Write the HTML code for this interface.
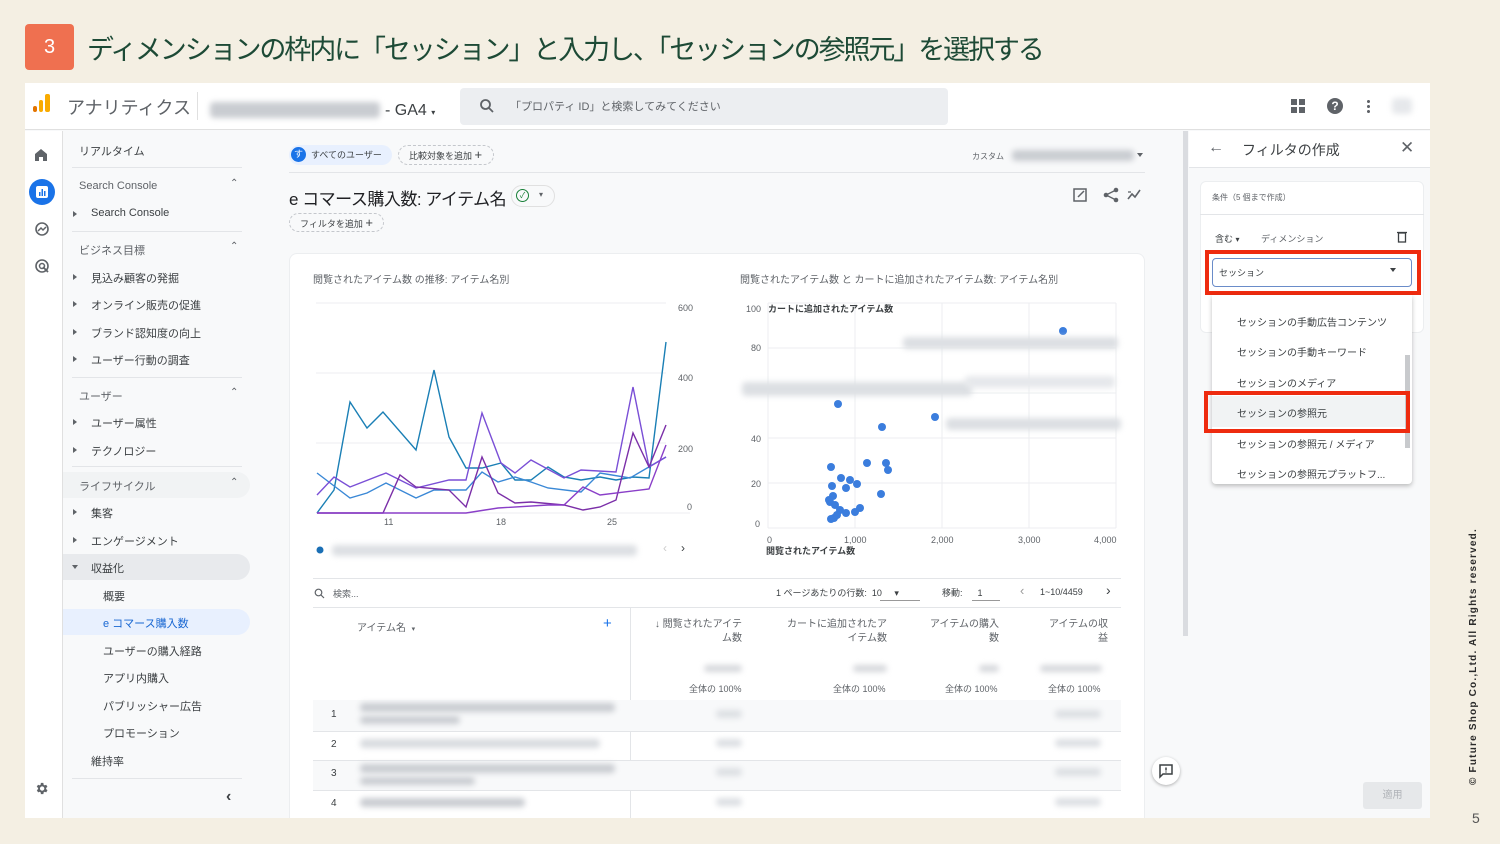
<!DOCTYPE html>
<html><head><meta charset="utf-8"><style>
*{margin:0;padding:0;box-sizing:border-box}
body{width:1500px;height:844px;background:#f4efe3;position:relative;overflow:hidden;font-family:"Liberation Sans","Noto Sans CJK JP",sans-serif;color:#3c4043}
.a{position:absolute;white-space:nowrap}
.s{font-size:11px;color:#3c4043}
.g{color:#5f6368}
.bl{position:absolute;background:#c9ccd1;border-radius:4px;filter:blur(3px)}
.hr{position:absolute;height:1px;background:#e3e5e8}
.tri{position:absolute;width:0;height:0;border-top:3px solid transparent;border-bottom:3px solid transparent;border-left:4px solid #5f6368}
</style></head><body>
<div class="a" style="left:25px;top:24px;width:49px;height:46px;background:#ef7050;border-radius:4px;color:#fff;font-size:20px;text-align:center;line-height:46px">3</div>
<div class="a" style="left:87px;top:28px;font-size:27px;color:#1d4a36;letter-spacing:-2.1px">ディメンションの枠内に「セッション」と入力し、「セッションの参照元」を選択する</div>

<!-- screenshot frame -->
<div class="a" style="left:25px;top:83px;width:1405px;height:735px;background:#f8f9fa"></div>
<!-- top bar -->
<div class="a" style="left:25px;top:83px;width:1405px;height:47px;background:#fff;border-bottom:1px solid #e0e0e0"></div>
<div class="a" style="left:33px;top:106px;width:4px;height:6px;background:#e37400;border-radius:2px"></div>
<div class="a" style="left:39px;top:100px;width:4px;height:12px;background:#f9ab00;border-radius:2px"></div>
<div class="a" style="left:45px;top:94px;width:5px;height:18px;background:#f9ab00;border-radius:2px"></div>
<div class="a" style="left:67px;top:94px;font-size:18px;color:#5f6368">アナリティクス</div>
<div class="a" style="left:197px;top:92px;width:1px;height:28px;background:#e0e0e0"></div>
<div class="bl" style="left:210px;top:102px;width:170px;height:16px"></div>
<div class="a" style="left:385px;top:102px;font-size:16px;color:#3c4043">- GA4 <span style="font-size:8px">▾</span></div>
<div class="a" style="left:460px;top:88px;width:488px;height:37px;background:#eceef1;border-radius:4px"></div>
<svg class="a" style="left:479px;top:98px" width="16" height="16" viewBox="0 0 16 16"><circle cx="6.5" cy="6.5" r="4.5" fill="none" stroke="#5f6368" stroke-width="1.8"/><path d="M10 10l4 4" stroke="#5f6368" stroke-width="1.8"/></svg>
<div class="a g" style="left:510px;top:98px;font-size:11px">「プロパティ ID」と検索してみてください</div>
<svg class="a" style="left:1291px;top:99px" width="14" height="14"><rect x="0" y="0" width="6" height="6" fill="#5f6368"/><rect x="8" y="0" width="6" height="6" fill="#5f6368"/><rect x="0" y="8" width="6" height="6" fill="#5f6368"/><rect x="8" y="8" width="6" height="6" fill="#5f6368"/></svg>
<div class="a" style="left:1327px;top:98px;width:16px;height:16px;border-radius:50%;background:#5f6368;color:#fff;font-size:12px;font-weight:bold;text-align:center;line-height:16px">?</div>
<div class="a" style="left:1367px;top:99px;width:3px;height:14px;background:radial-gradient(circle,#5f6368 1.4px,transparent 1.6px) 0 0/3px 5px"></div>
<div class="bl" style="left:1392px;top:98px;width:20px;height:16px;background:#e6e8eb"></div>

<!-- icon rail -->
<div class="a" style="left:25px;top:131px;width:38px;height:687px;background:#fff;border-right:1px solid #e0e0e0"></div>
<svg class="a" style="left:34px;top:148px" width="14" height="14"><path d="M1 6L7 1l6 5v7H9V9H5v4H1z" fill="#5f6368"/></svg>
<div class="a" style="left:29px;top:179px;width:26px;height:26px;border-radius:50%;background:#1a73e8"></div>
<svg class="a" style="left:36px;top:186px" width="12" height="12"><rect x="0" y="0" width="12" height="12" rx="2" fill="#fff"/><rect x="3" y="6" width="1.5" height="4" fill="#1a73e8"/><rect x="5.5" y="3" width="1.5" height="7" fill="#1a73e8"/><rect x="8" y="5" width="1.5" height="5" fill="#1a73e8"/></svg>
<svg class="a" style="left:34px;top:221px" width="16" height="16"><circle cx="8" cy="8" r="6" fill="none" stroke="#5f6368" stroke-width="1.6"/><path d="M4 10l3-3 2 2 3-3" fill="none" stroke="#5f6368" stroke-width="1.5"/></svg>
<svg class="a" style="left:34px;top:258px" width="16" height="16"><circle cx="8" cy="8" r="6" fill="none" stroke="#5f6368" stroke-width="1.6"/><circle cx="8" cy="8" r="2.5" fill="none" stroke="#5f6368" stroke-width="1.5"/><path d="M9 9l5 5" stroke="#5f6368" stroke-width="1.8"/></svg>
<svg class="a" style="left:34px;top:781px" width="15" height="15" viewBox="0 0 24 24"><path fill="#5f6368" d="M19.4 13a7.5 7.5 0 000-2l2.1-1.6-2-3.5-2.5 1a7 7 0 00-1.7-1L15 3h-4l-.4 2.9a7 7 0 00-1.7 1l-2.5-1-2 3.5L6.6 11a7.5 7.5 0 000 2l-2.1 1.6 2 3.5 2.5-1a7 7 0 001.7 1L11 21h4l.4-2.9a7 7 0 001.7-1l2.5 1 2-3.5zM13 15.5a3.5 3.5 0 110-7 3.5 3.5 0 010 7z"/></svg>

<!-- nav -->
<div class="a s" style="left:79px;top:143px">リアルタイム</div>
<div class="hr" style="left:72px;top:167px;width:170px"></div>
<div class="a s g" style="left:79px;top:180px">Search Console</div><div class="a g" style="left:230px;top:178px;font-size:10px">⌃</div>
<div class="tri" style="left:73px;top:211px"></div><div class="a s" style="left:91px;top:207px">Search Console</div>
<div class="hr" style="left:72px;top:231px;width:170px"></div>
<div class="a s g" style="left:79px;top:242px">ビジネス目標</div><div class="a g" style="left:230px;top:241px;font-size:10px">⌃</div>
<div class="tri" style="left:73px;top:274px"></div><div class="a s" style="left:91px;top:270px">見込み顧客の発掘</div>
<div class="tri" style="left:73px;top:301px"></div><div class="a s" style="left:91px;top:297px">オンライン販売の促進</div>
<div class="tri" style="left:73px;top:329px"></div><div class="a s" style="left:91px;top:325px">ブランド認知度の向上</div>
<div class="tri" style="left:73px;top:356px"></div><div class="a s" style="left:91px;top:352px">ユーザー行動の調査</div>
<div class="hr" style="left:72px;top:377px;width:170px"></div>
<div class="a s g" style="left:79px;top:388px">ユーザー</div><div class="a g" style="left:230px;top:387px;font-size:10px">⌃</div>
<div class="tri" style="left:73px;top:419px"></div><div class="a s" style="left:91px;top:415px">ユーザー属性</div>
<div class="tri" style="left:73px;top:447px"></div><div class="a s" style="left:91px;top:443px">テクノロジー</div>
<div class="hr" style="left:72px;top:466px;width:170px"></div>
<div class="a" style="left:63px;top:472px;width:187px;height:26px;background:#f1f3f4;border-radius:0 13px 13px 0"></div>
<div class="a s g" style="left:79px;top:478px">ライフサイクル</div><div class="a g" style="left:230px;top:477px;font-size:10px">⌃</div>
<div class="tri" style="left:73px;top:509px"></div><div class="a s" style="left:91px;top:505px">集客</div>
<div class="tri" style="left:73px;top:537px"></div><div class="a s" style="left:91px;top:533px">エンゲージメント</div>
<div class="a" style="left:63px;top:554px;width:187px;height:26px;background:#e8eaed;border-radius:0 13px 13px 0"></div>
<div class="a" style="left:72px;top:565px;border-left:3px solid transparent;border-right:3px solid transparent;border-top:4px solid #5f6368"></div><div class="a s" style="left:91px;top:560px">収益化</div>
<div class="a s" style="left:103px;top:588px">概要</div>
<div class="a" style="left:63px;top:609px;width:187px;height:26px;background:#e8f0fe;border-radius:0 13px 13px 0"></div>
<div class="a s" style="left:103px;top:615px;color:#1967d2">e コマース購入数</div>
<div class="a s" style="left:103px;top:643px">ユーザーの購入経路</div>
<div class="a s" style="left:103px;top:670px">アプリ内購入</div>
<div class="a s" style="left:103px;top:698px">パブリッシャー広告</div>
<div class="a s" style="left:103px;top:725px">プロモーション</div>
<div class="a s" style="left:91px;top:753px">維持率</div>
<div class="hr" style="left:72px;top:778px;width:170px"></div>
<div class="a" style="left:226px;top:788px;font-size:16px;font-weight:bold;color:#3c4043">‹</div>

<!-- main header -->
<div class="a" style="left:289px;top:145px;width:103px;height:20px;background:#e8f0fe;border-radius:10px"></div>
<div class="a" style="left:291px;top:147px;width:15px;height:15px;border-radius:50%;background:#1a73e8;color:#fff;font-size:9px;text-align:center;line-height:15px">す</div>
<div class="a" style="left:311px;top:148px;font-size:9px">すべてのユーザー</div>
<div class="a" style="left:398px;top:145px;width:96px;height:20px;border:1px dashed #c4c7cc;border-radius:10px;font-size:9px;padding:3px 0 0 10px">比較対象を追加 <span style="font-size:13px;line-height:10px">+</span></div>
<div class="hr" style="left:289px;top:172px;width:856px"></div>
<div class="a g" style="left:972px;top:151px;font-size:8px">カスタム</div>
<div class="bl" style="left:1012px;top:150px;width:122px;height:11px"></div>
<div class="a" style="left:1137px;top:153px;border-left:3px solid transparent;border-right:3px solid transparent;border-top:4px solid #5f6368"></div>
<div class="a" style="left:289px;top:185px;font-size:17px;color:#202124;letter-spacing:-0.5px">e コマース購入数: アイテム名</div>
<div class="a" style="left:511px;top:185px;width:44px;height:22px;border:1px solid #e0e0e0;border-radius:11px"></div>
<div class="a" style="left:516px;top:189px;width:13px;height:13px;border:1.5px solid #188038;border-radius:50%;color:#188038;font-size:8px;text-align:center;line-height:11px">✓</div>
<div class="a g" style="left:539px;top:190px;font-size:8px">▾</div>
<div class="a" style="left:289px;top:213px;width:95px;height:19px;border:1px dashed #c4c7cc;border-radius:10px;font-size:9px;padding:3px 0 0 10px">フィルタを追加 <span style="font-size:13px;line-height:10px">+</span></div>
<svg class="a" style="left:1073px;top:187px" width="70" height="16"><rect x="1" y="2" width="12" height="12" fill="none" stroke="#5f6368" stroke-width="1.5"/><path d="M5 10l6-6" stroke="#5f6368" stroke-width="1.5"/><circle cx="43" cy="3" r="2.3" fill="#5f6368"/><circle cx="33" cy="8" r="2.3" fill="#5f6368"/><circle cx="43" cy="13" r="2.3" fill="#5f6368"/><path d="M43 3L33 8l10 5" stroke="#5f6368" stroke-width="1.3" fill="none"/><path d="M55 12l4-5 3 3 5-7" stroke="#5f6368" stroke-width="1.6" fill="none"/><path d="M55 5l3 0" stroke="#5f6368" stroke-width="1.3"/></svg>

<!-- card -->
<div class="a" style="left:289px;top:253px;width:856px;height:565px;background:#fff;border-radius:8px 8px 0 0;border:1px solid #eceef0;border-bottom:none"></div>
<div class="a" style="left:313px;top:271px;font-size:10px;color:#5f6368">閲覧されたアイテム数 の推移: アイテム名別</div>
<div class="a" style="left:740px;top:271px;font-size:10px;color:#5f6368">閲覧されたアイテム数 と カートに追加されたアイテム数: アイテム名別</div>
<svg class="a" style="left:0;top:0" width="1200" height="600">
<g stroke="#eceef0" stroke-width="1"><line x1="316" y1="303" x2="666" y2="303"/><line x1="316" y1="373" x2="666" y2="373"/><line x1="316" y1="443" x2="666" y2="443"/><line x1="316" y1="513" x2="690" y2="513"/></g>
<g font-size="9" fill="#5f6368" font-family="Liberation Sans,sans-serif"><text x="678" y="311">600</text><text x="678" y="381">400</text><text x="678" y="452">200</text><text x="687" y="510">0</text><text x="384" y="525">11</text><text x="496" y="525">18</text><text x="607" y="525">25</text></g>
<g fill="none" stroke-width="1.4">
<polyline stroke="#1a7fb5" points="317,513 334,490 350,402 367,428 383,412 416,450 434,370 449,437 466,468 482,468 501,463 515,480 531,480 548,467 564,477 581,480 600,477 616,480 633,477 649,478 666,342"/>
<polyline stroke="#3a88d6" points="317,473 350,498 367,493 386,483 416,498 434,490 466,490 482,472 498,482 515,477 531,482 548,488 581,492 600,473 630,478 666,457"/>
<polyline stroke="#7a4fd6" points="317,495 334,477 350,487 386,473 416,488 449,480 466,480 482,413 501,463 515,473 531,460 564,478 581,470 616,472 633,387 649,467 666,457"/>
<polyline stroke="#7b2fa8" points="317,513 383,513 400,475 416,487 449,490 466,507 482,457 498,493 515,503 531,502 564,505 583,510 600,507 616,500 633,433 649,467 666,425"/>
<polyline stroke="#8a3fc8" points="317,513 466,513 485,510 498,508 548,505 564,505 583,487 600,495 649,489 666,445"/>
</g>
<circle cx="320" cy="550" r="3.5" fill="#1a6fb5"/>
<g stroke="#eceef0"><line x1="768" y1="303" x2="1116" y2="303"/><line x1="768" y1="348" x2="1116" y2="348"/><line x1="768" y1="393" x2="1116" y2="393"/><line x1="768" y1="438" x2="1116" y2="438"/><line x1="768" y1="483" x2="1116" y2="483"/><line x1="768" y1="528" x2="1116" y2="528"/><line x1="768" y1="303" x2="768" y2="528"/><line x1="855" y1="303" x2="855" y2="528"/><line x1="942" y1="303" x2="942" y2="528"/><line x1="1029" y1="303" x2="1029" y2="528"/><line x1="1116" y1="303" x2="1116" y2="528"/></g>
<g font-size="9" fill="#5f6368" font-family="Liberation Sans,sans-serif"><text x="746" y="312">100</text><text x="751" y="351">80</text><text x="751" y="442">40</text><text x="751" y="487">20</text><text x="755" y="527">0</text><text x="767" y="543">0</text><text x="844" y="543">1,000</text><text x="931" y="543">2,000</text><text x="1018" y="543">3,000</text><text x="1094" y="543">4,000</text></g>
<g fill="#3b7ddd"><circle cx="1063" cy="331" r="4"/><circle cx="838" cy="404" r="4"/><circle cx="882" cy="427" r="4"/><circle cx="935" cy="417" r="4"/><circle cx="831" cy="467" r="4"/><circle cx="841" cy="478" r="4"/><circle cx="850" cy="480" r="4"/><circle cx="867" cy="463" r="4"/><circle cx="886" cy="463" r="4"/><circle cx="888" cy="470" r="4"/><circle cx="832" cy="486" r="4"/><circle cx="846" cy="488" r="4"/><circle cx="857" cy="484" r="4"/><circle cx="881" cy="494" r="4"/><circle cx="833" cy="496" r="4"/><circle cx="830" cy="502" r="4"/><circle cx="835" cy="505" r="4"/><circle cx="840" cy="510" r="4"/><circle cx="846" cy="513" r="4"/><circle cx="855" cy="512" r="4"/><circle cx="860" cy="508" r="4"/><circle cx="834" cy="518" r="4"/><circle cx="831" cy="519" r="4"/><circle cx="837" cy="515" r="4"/><circle cx="829" cy="500" r="4"/></g>
</svg>
<div class="a" style="left:768px;top:302px;font-size:9px;color:#3c4043;font-weight:bold">カートに追加されたアイテム数</div>
<div class="a" style="left:766px;top:544px;font-size:9px;color:#3c4043;font-weight:bold">閲覧されたアイテム数</div>
<div class="bl" style="left:903px;top:337px;width:215px;height:12px;background:#dcdfe3"></div>
<div class="bl" style="left:742px;top:382px;width:230px;height:14px;background:#dcdfe3"></div>
<div class="bl" style="left:965px;top:376px;width:150px;height:12px;background:#e6e8eb"></div>
<div class="bl" style="left:946px;top:418px;width:175px;height:12px;background:#dcdfe3"></div>
<div class="bl" style="left:332px;top:545px;width:305px;height:11px;background:#dcdfe3"></div>
<div class="a g" style="left:663px;top:541px;font-size:12px;color:#ccc">‹</div><div class="a" style="left:681px;top:541px;font-size:12px">›</div>

<!-- table -->
<div class="hr" style="left:313px;top:578px;width:808px"></div>
<svg class="a" style="left:314px;top:588px" width="11" height="11"><circle cx="4.5" cy="4.5" r="3.3" fill="none" stroke="#5f6368" stroke-width="1.2"/><path d="M7 7l3 3" stroke="#5f6368" stroke-width="1.2"/></svg>
<div class="a g" style="left:333px;top:587px;font-size:9px">検索...</div>
<div class="a" style="left:776px;top:586px;font-size:9px">1 ページあたりの行数: &nbsp;10 &nbsp;&nbsp;&nbsp;&nbsp;▾</div>
<div class="hr" style="left:880px;top:600px;width:40px;background:#999"></div>
<div class="a" style="left:942px;top:586px;font-size:9px">移動: &nbsp;&nbsp;&nbsp;&nbsp;&nbsp;1</div>
<div class="hr" style="left:972px;top:600px;width:28px;background:#999"></div>
<div class="a" style="left:1020px;top:583px;font-size:13px;color:#999">‹</div>
<div class="a" style="left:1040px;top:587px;font-size:9px">1~10/4459</div>
<div class="a" style="left:1106px;top:582px;font-size:14px">›</div>
<div class="hr" style="left:313px;top:607px;width:808px"></div>
<div class="a" style="left:630px;top:607px;width:1px;height:211px;background:#e3e5e8"></div>
<div class="a g" style="left:357px;top:619px;font-size:10px">アイテム名 &nbsp;<span style="font-size:7px">▾</span></div>
<div class="a" style="left:603px;top:615px;font-size:15px;color:#1a73e8">+</div>
<div class="a" style="left:643px;top:618px;font-size:10px;color:#5f6368;line-height:14px;text-align:right;width:99px">↓ 閲覧されたアイテ<br>ム数</div>
<div class="a" style="left:770px;top:618px;font-size:10px;color:#5f6368;line-height:14px;text-align:right;width:117px">カートに追加されたア<br>イテム数</div>
<div class="a" style="left:910px;top:618px;font-size:10px;color:#5f6368;line-height:14px;text-align:right;width:89px">アイテムの購入<br>数</div>
<div class="a" style="left:1030px;top:618px;font-size:10px;color:#5f6368;line-height:14px;text-align:right;width:78px">アイテムの収<br>益</div>
<div class="bl" style="left:704px;top:665px;width:38px;height:7px;background:#d5d7db"></div>
<div class="bl" style="left:853px;top:665px;width:34px;height:7px;background:#d5d7db"></div>
<div class="bl" style="left:979px;top:665px;width:20px;height:7px;background:#d5d7db"></div>
<div class="bl" style="left:1040px;top:665px;width:62px;height:7px;background:#d5d7db"></div>
<div class="a g" style="left:689px;top:682px;font-size:9px">全体の 100%</div>
<div class="a g" style="left:833px;top:682px;font-size:9px">全体の 100%</div>
<div class="a g" style="left:945px;top:682px;font-size:9px">全体の 100%</div>
<div class="a g" style="left:1048px;top:682px;font-size:9px">全体の 100%</div>
<div class="a" style="left:313px;top:700px;width:808px;height:31px;background:#f8f9fa"></div>
<div class="a" style="left:313px;top:760px;width:808px;height:30px;background:#f8f9fa"></div>
<div class="hr" style="left:313px;top:731px;width:808px"></div><div class="hr" style="left:313px;top:760px;width:808px"></div><div class="hr" style="left:313px;top:790px;width:808px"></div>
<div class="a" style="left:331px;top:709px;font-size:10px">1</div>
<div class="a" style="left:331px;top:739px;font-size:10px">2</div>
<div class="a" style="left:331px;top:768px;font-size:10px">3</div>
<div class="a" style="left:331px;top:798px;font-size:10px">4</div>
<div class="bl" style="left:360px;top:703px;width:255px;height:9px"></div><div class="bl" style="left:360px;top:716px;width:100px;height:8px"></div>
<div class="bl" style="left:360px;top:739px;width:240px;height:9px;background:#d8dbdf"></div>
<div class="bl" style="left:360px;top:764px;width:255px;height:9px"></div><div class="bl" style="left:360px;top:777px;width:115px;height:8px"></div>
<div class="bl" style="left:360px;top:798px;width:165px;height:9px"></div>
<div class="bl" style="left:716px;top:710px;width:26px;height:8px;background:#dcdfe3"></div><div class="bl" style="left:716px;top:739px;width:26px;height:8px;background:#dcdfe3"></div><div class="bl" style="left:716px;top:768px;width:26px;height:8px;background:#dcdfe3"></div><div class="bl" style="left:716px;top:798px;width:26px;height:8px;background:#dcdfe3"></div>
<div class="bl" style="left:1055px;top:710px;width:46px;height:8px;background:#dcdfe3"></div><div class="bl" style="left:1055px;top:739px;width:46px;height:8px;background:#dcdfe3"></div><div class="bl" style="left:1055px;top:768px;width:46px;height:8px;background:#dcdfe3"></div><div class="bl" style="left:1055px;top:798px;width:46px;height:8px;background:#dcdfe3"></div>
<div class="a" style="left:1152px;top:757px;width:28px;height:28px;border-radius:50%;background:#fff;box-shadow:0 1px 3px rgba(0,0,0,.3)"></div>
<svg class="a" style="left:1158px;top:763px" width="16" height="16"><path d="M2 2h12v9H5l-3 3z" fill="none" stroke="#3c4043" stroke-width="1.5"/><path d="M8 4.5v3M8 8.5v1" stroke="#3c4043" stroke-width="1.5"/></svg>
<div class="a" style="left:1183px;top:131px;width:5px;height:505px;background:#dadce0"></div>

<!-- right panel -->
<div class="a" style="left:1189px;top:131px;width:241px;height:687px;background:#f8f9fa"></div>
<div class="a" style="left:1189px;top:131px;width:241px;height:37px;background:#fff;border-bottom:1px solid #e3e5e8"></div>
<div class="a" style="left:1208px;top:139px;font-size:16px;color:#5f6368">←</div>
<div class="a" style="left:1242px;top:140px;font-size:14px;color:#3c4043">フィルタの作成</div>
<div class="a" style="left:1400px;top:138px;font-size:17px;color:#5f6368">✕</div>
<div class="a" style="left:1200px;top:181px;width:224px;height:152px;background:#fff;border-radius:6px;border:1px solid #eceef0"></div>
<div class="a g" style="left:1212px;top:192px;font-size:8px">条件（5 個まで作成）</div>
<div class="hr" style="left:1200px;top:214px;width:224px"></div>
<div class="a" style="left:1215px;top:232px;font-size:9px;color:#3c4043">含む <span style="font-size:8px">▾</span></div>
<div class="a g" style="left:1261px;top:232px;font-size:9px">ディメンション</div>
<svg class="a" style="left:1397px;top:231px" width="10" height="12"><rect x="1.5" y="2" width="7" height="9" fill="none" stroke="#3c4043" stroke-width="1.3"/><path d="M0 1.5h10" stroke="#3c4043" stroke-width="1.3"/></svg>
<div class="a" style="left:1212px;top:258px;width:200px;height:29px;border:1px solid #6a8cc9;border-radius:4px;background:#fff"></div>
<div class="a" style="left:1219px;top:266px;font-size:9px">セッション</div>
<div class="a" style="left:1390px;top:268px;border-left:3px solid transparent;border-right:3px solid transparent;border-top:4px solid #3c4043"></div>
<div class="a" style="left:1205px;top:250px;width:216px;height:45px;border:4px solid #ee2b0f"></div>
<div class="a" style="left:1212px;top:295px;width:200px;height:189px;background:#fff;box-shadow:0 2px 5px rgba(0,0,0,.25);border-radius:0 0 4px 4px"></div>
<div class="a" style="left:1237px;top:314px;font-size:10px">セッションの手動広告コンテンツ</div>
<div class="a" style="left:1237px;top:344px;font-size:10px">セッションの手動キーワード</div>
<div class="a" style="left:1237px;top:375px;font-size:10px">セッションのメディア</div>
<div class="a" style="left:1212px;top:396px;width:194px;height:31px;background:#f1f3f4"></div>
<div class="a" style="left:1237px;top:405px;font-size:10px">セッションの参照元</div>
<div class="a" style="left:1237px;top:436px;font-size:10px">セッションの参照元 / メディア</div>
<div class="a" style="left:1237px;top:466px;font-size:10px">セッションの参照元プラットフ...</div>
<div class="a" style="left:1405px;top:355px;width:5px;height:93px;background:#c8cacd"></div>
<div class="a" style="left:1204px;top:391px;width:206px;height:42px;border:4px solid #ee2b0f"></div>
<div class="a" style="left:1363px;top:782px;width:59px;height:27px;background:#e6e8ea;border-radius:3px;color:#b0b3b8;font-size:10px;text-align:center;line-height:27px">適用</div>

<div class="a" style="left:1468px;top:785px;transform:rotate(-90deg);transform-origin:0 0;font-size:10px;font-weight:bold;color:#2a2a2a;letter-spacing:1.2px">© Future Shop Co.,Ltd. All Rights reserved.</div>
<div class="a" style="left:1472px;top:810px;font-size:14px;color:#555">5</div>
</body></html>
